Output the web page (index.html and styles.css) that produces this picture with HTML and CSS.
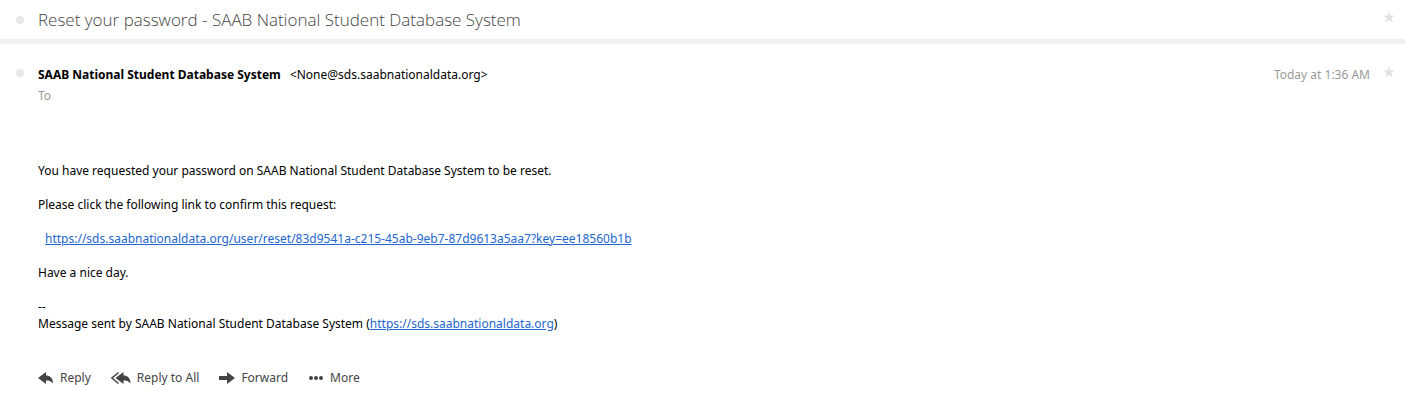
FILE: index.html
```html
<!DOCTYPE html>
<html lang="en">
<head>
<meta charset="utf-8">
<title>Reset your password</title>
<link rel="stylesheet" href="styles.css">
</head>
<body>
<header class="subject">
  <span class="dot"></span>
  <h1 class="title">Reset your password - SAAB National Student Database System</h1>
  <button class="star" aria-label="Star conversation"><svg viewBox="0 0 12 12"><path d="M6 0l1.400 4.500H12L8.300 7.100l1.400 4.500L6 8.900 2.300 11.600l1.400-4.500L0 4.500h4.600z"/></svg></button>
</header>
<main class="message">
  <div class="meta">
    <span class="dot"></span>
    <div class="sender">
      <p class="from"><strong class="name">SAAB National Student Database System</strong> <span class="address">&lt;None@sds.saabnationaldata.org&gt;</span></p>
      <p class="to">To</p>
    </div>
    <time class="date">Today at 1:36 AM</time>
    <button class="star" aria-label="Star message"><svg viewBox="0 0 12 12"><path d="M6 0l1.400 4.500H12L8.300 7.100l1.400 4.500L6 8.900 2.300 11.600l1.400-4.500L0 4.500h4.600z"/></svg></button>
  </div>
  <div class="body">
    <p>You have requested your password on SAAB National Student Database System to be reset.</p>
    <p>Please click the following link to confirm this request:</p>
    <p class="reset"><a href="#reset">https://sds.saabnationaldata.org/user/reset/83d9541a-c215-45ab-9eb7-87d9613a5aa7?key=ee18560b1b</a></p>
    <p>Have a nice day.</p>
    <p>--<br>Message sent by SAAB National Student Database System (<a href="#home">https://sds.saabnationaldata.org</a>)</p>
  </div>
  <div class="actions">
    <button class="action"><svg class="icon" viewBox="0 0 16 14"><path d="M0 7l8-6v3.500c4 0 7 2.500 7 8-2-2.500-4-3-7-3V13z"/></svg>Reply</button>
    <button class="action"><svg class="icon wide" viewBox="0 0 20 14"><path d="M4.500 7l8-6v3.500c4 0 7 2.500 7 8-2-2.500-4-3-7-3V13z"/><path d="M7.500 1.500L1 7l6.500 5.500" fill="none" stroke="currentColor" stroke-width="1.500"/></svg>Reply to All</button>
    <button class="action"><svg class="icon" viewBox="0 0 16 14"><path d="M0 5h8V1l8 6-8 6V9H0z"/></svg>Forward</button>
    <button class="action"><svg class="icon" viewBox="0 0 16 14"><circle cx="3" cy="7" r="2"/><circle cx="8" cy="7" r="2"/><circle cx="13" cy="7" r="2"/></svg>More</button>
  </div>
</main>
</body>
</html>
```
FILE: styles.css
```css
* { box-sizing: border-box; }
body { margin: 0; background: #fff; color: #000; font: 12px/17px "Noto Sans", "Open Sans", sans-serif; }
p, h1 { margin: 0; }
button { border: 0; padding: 0; background: none; font: inherit; }
.subject { display: flex; align-items: center; padding: 8px 10px 7px 16px; border-bottom: 5px solid #f0f0f4; }
.title { flex: 1; font-family: "Open Sans", sans-serif; font-size: 17px; line-height: 24px; font-weight: 300; color: #444; }
.dot { width: 8px; height: 8px; margin-right: 14px; border-radius: 50%; background: #e8e8e8; }
.star { width: 12px; height: 12px; fill: #e2e2e2; }
.star svg { display: block; }
.subject .star { margin-bottom: 6px; }
.message { padding: 22px 10px 0 16px; }
.meta { display: flex; align-items: flex-start; }
.meta .dot { margin-top: 3px; }
.sender { flex: 1; }
.address { margin-left: 6px; }
.to { margin-top: 4px; }
.to, .date { color: #999; }
.date { margin-right: 13px; }
.body { padding: 58px 22px 0; }
.body p { margin-bottom: 17px; }
.body .reset { padding-left: 7px; }
a { color: #2366cf; }
.actions { display: flex; flex-wrap: wrap; gap: 20px; padding: 20px 22px; }
.action { display: flex; align-items: center; gap: 6px; color: #444; }
.icon { width: 16px; height: 14px; fill: currentColor; }
.wide { width: 20px; }
```
